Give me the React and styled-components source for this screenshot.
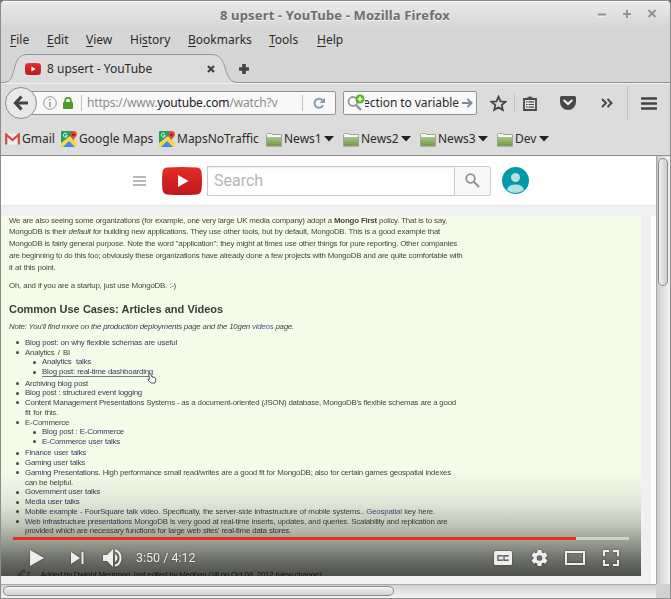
import React from "react";
import styled, { createGlobalStyle, css } from "styled-components";

const Global = createGlobalStyle`
  * { box-sizing: border-box; }
  html, body { margin: 0; padding: 0; overflow: hidden; background: #74777f; }
`;

const Window = styled.div`
  width: 671px; height: 599px; overflow: hidden;
  display: flex; flex-direction: column;
  border: 1px solid #8c8c8c; border-radius: 5px 5px 0 0;
  background: #d6d6d6; color: #2b2b2b;
  font-family: "Noto Sans", "Open Sans", sans-serif; font-size: 12px;
`;
const TitleBar = styled.header`
  height: 27px; flex: none; display: grid; grid-template-columns: 1fr auto; align-items: center;
  background: linear-gradient(#e9e9e9, #d6d6d6);
  border-top: 1px solid #fff; padding-right: 13px;
`;
const Title = styled.h1`
  margin: 0 0 0 219px; font-size: 13px; line-height: 20px; font-weight: 700; white-space: nowrap;
  color: #6e6e6e; text-shadow: 0 1px #f5f5f5; letter-spacing: 0.15px;
`;
const WindowButtons = styled.div`display: flex; gap: 13px; margin-top: -4px;`;

const MenuBar = styled.nav`height: 25px; flex: none; display: flex; padding: 0 0 2px 9px; align-items: center;`;
const MenuItem = styled.span`
  width: ${(p) => p.$w}px; line-height: 16px; white-space: nowrap;
  u { text-underline-offset: 2px; text-decoration-thickness: 1px; }
`;

const TabStrip = styled.div`height: 30px; flex: none; display: grid; grid-template-columns: 237px 1fr;`;
const Tab = styled.div`
  display: grid; height: 30px;
  > * { grid-area: 1 / 1; }
`;
const TabContent = styled.div`display: flex; align-items: center; padding: 1px 0 0 24px;`;
const TabLabel = styled.span`margin-left: 6px; width: 160px; line-height: 16px; white-space: nowrap;`;
const TabRest = styled.div`display: flex; align-items: flex-start; padding: 11px 0 0 1px; border-bottom: 1px solid #909396; height: 30px;`;

const Toolbar = styled.div`
  height: 40px; flex: none; display: flex; align-items: center; background: #dcdcdc; padding: 0 0 1px 4px;
  border-top: 1px solid #f0f0f0;
`;
const BackButton = styled.div`
  width: 32px; height: 32px; flex: none; border-radius: 50%; border: 1px solid #8e8e8e; z-index: 1;
  background: #e9e9e9; display: grid; place-items: center;
`;
const UrlField = styled.div`
  width: 306px; height: 24px; flex: none; margin-left: -7px; background: #f8f8f8; border: 1px solid #929292;
  border-radius: 2px; display: flex; align-items: center; padding-left: 12px;
`;
const Rule = styled.i`width: 1px; flex: none; height: ${(p) => p.$h}px; background: #c2c2c2; margin: 0 ${(p) => p.$r}px 0 ${(p) => p.$l}px;`;
const UrlText = styled.span`
  width: 191px; overflow: hidden; white-space: nowrap; font-size: 12px; line-height: 20px; color: #8d8d8d; letter-spacing: -0.18px;
  b { font-weight: 400; color: #222; }
`;
const SearchField = styled.div`
  width: 134px; height: 24px; flex: none; margin-left: 7px; background: #f8f8f8; border: 1px solid #929292; border-radius: 2px;
  display: flex; align-items: center; padding-left: 3px;
`;
const SearchText = styled.span`
  width: 94px; display: flex; justify-content: flex-end; overflow: hidden; white-space: nowrap; line-height: 20px; margin-right: 3px;
  letter-spacing: -0.08px;
`;
const Tools = styled.div`display: flex; align-items: center; flex: 1; padding-left: 13px;`;

const Bookmarks = styled.div`
  height: 33px; flex: none; display: flex; align-items: center; background: #dcdcdc; padding-left: 4px;
  border-bottom: 1px solid #8f8f8f;
`;
const Bookmark = styled.div`width: ${(p) => p.$w}px; display: flex; align-items: center; gap: 2px; flex: none;`;
const BookmarkLabel = styled.span`line-height: 18px; white-space: nowrap; width: ${(p) => p.$w}px;`;

const Body = styled.div`flex: 1; min-height: 0; display: grid; grid-template-columns: 655px 14px; grid-template-rows: 428px 14px;`;
const Page = styled.main`background: #f0f0f0; overflow: hidden; font-family: Roboto, sans-serif;`;
const Masthead = styled.div`
  height: 50px; background: #fff; border-bottom: 1px solid #e6e6e6; display: flex; align-items: center; padding-left: 132px;
`;
const Input = styled.div`
  width: 247px; height: 30px; margin-left: 5px; border: 1px solid #c8c8c8; border-right: 0; padding-left: 6px;
  box-shadow: inset 0 1px 2px #eee; font-size: 16px; line-height: 28px; color: #b5b5b5;
`;
const SearchButton = styled.div`width: 37px; height: 30px; border: 1px solid #ccc; border-radius: 0 2px 2px 0; background: #f8f8f8; display: grid; place-items: center;`;
const Watch = styled.div`display: flex; justify-content: space-between; padding-top: 10px; height: 378px;`;
const SideCard = styled.div`width: 5px; background: #fff;`;
const Player = styled.section`
  width: 640px; height: 360px; overflow: hidden; background: #f4fbe9; display: grid;
  > * { grid-area: 1 / 1; min-height: 0; }
`;
const Frame = styled.article`
  height: 360px; overflow: hidden; padding-left: 8px; color: #45483f;
  font-family: "Liberation Sans", Arial, sans-serif; font-size: 7.9px; filter: blur(0.25px);
`;
const Line = styled.div`
  width: ${(p) => p.$w}px; height: ${(p) => p.$h || 9.75}px; line-height: ${(p) => p.$h || 9.75}px;
  white-space: nowrap; text-align: justify; text-align-last: justify; letter-spacing: -0.23px;
`;
const Paragraph = styled.div`margin-top: -1.5px;`;
const Heading = styled(Line)`font-size: 11px; font-weight: 700; color: #3b3a34; margin-top: 4px; letter-spacing: -0.05px;`;
const Note = styled(Line)`font-style: italic; margin-top: 6.5px; margin-bottom: 6px;`;
const Link = styled.span`color: ${(p) => (p.$bright ? "#46568f" : "#35425a")}; ${(p) => p.$u && css`border-bottom: 0.6px solid #6d7a88;`}`;
const Row = styled.div`
  display: grid; grid-template-columns: 9px auto; padding-left: ${(p) => (p.$sub ? 24 : 7)}px; margin-top: ${(p) => (p.$gap ? 1.6 : 0)}px;
  &::before { content: ""; width: 3px; height: 3px; border-radius: 50%; background: #45483f; align-self: center; visibility: ${(p) => (p.$cont ? "hidden" : "visible")}; }
`;
const Caption = styled.div`display: flex; gap: 10px; margin: 34px 0 0 8px; color: #30332d; line-height: 10px;`;

const Overlay = styled.div`
  z-index: 1; height: 360px; display: flex; flex-direction: column; justify-content: flex-end; padding: 0 12px;
  background: linear-gradient(transparent 255px, rgba(0,0,0,.08) 287px, rgba(0,0,0,.2) 307px, rgba(0,0,0,.36) 324px, rgba(0,0,0,.56) 344px, rgba(0,0,0,.69) 360px);
`;
const Track = styled.div`height: 3px; background: #d0d3cb; width: 616px;`;
const Played = styled.div`height: 3px; width: 563px; background: #f12b24;`;
const Controls = styled.div`height: 36px; display: flex; align-items: center; padding: 0 0 1px 17px; filter: drop-shadow(0 0 1px rgba(0,0,0,.45));`;
const Time = styled.span`color: #eee; font-size: 12.5px; width: 358px; margin-left: 14px;`;

const VScroll = styled.div`border-left: 1px solid #a5a5a5; background: linear-gradient(90deg, #ccc, #f2f2f2); padding: 2px 1px;`;
const VThumb = styled.div`width: 10px; height: 128px; border: 1px solid #8b8b8b; border-radius: 5px; background: linear-gradient(90deg, #f1f1f1, #cdcdcd);`;
const HScroll = styled.div`border-top: 1px solid #a9a9a9; background: linear-gradient(#d2d2d2, #f4f4f4); padding: 1px 2px;`;
const HThumb = styled.div`width: 391px; height: 10px; border: 1px solid #8b8b8b; border-radius: 5px; background: linear-gradient(#f3f3f3, #cfcfcf);`;
const Corner = styled.div`background: #d2d2d2;`;
const Svg = styled.svg`flex: none; display: block; margin-left: ${(p) => p.$l || 0}px;`;
const Pointer = styled.svg`margin: 157px 0 0 146px; z-index: 1;`;

const Tube = ({ w, h, l }) => (
  <Svg width={w} height={h} viewBox="0 0 40 28" preserveAspectRatio="none" $l={l}>
    <defs><linearGradient id="tube" x2="0" y2="1"><stop stopColor="#e52d27" /><stop offset="1" stopColor="#bf171d" /></linearGradient></defs>
    <path d="M5 .6Q20-.6 35 .6Q39.3 1 39.6 6Q40.4 14 39.6 22Q39.3 27 35 27.4Q20 28.6 5 27.4Q.7 27 .4 22Q-.4 14 .4 6Q.7 1 5 .6Z" fill="url(#tube)" />
    <path d="M16 8v12l10.500-6Z" fill="#fff" />
  </Svg>
);
const Maps = () => (
  <Svg width="16" height="16" viewBox="0 0 16 16">
    <path d="M0 1Q0 0 1 0H15Q16 0 16 1V15L15 16H1L0 15Z" fill="#dedbd2" />
    <path d="M0 1Q0 0 1 0H12L11 7L0 16Z" fill="#23a05c" />
    <path d="M0 12L9 5L16 12V15L13 16L8 10.500L1.500 16H0Z" fill="#f6d846" />
    <path d="M2 16L8 10L14 16Z" fill="#4286f5" />
    <path d="M6.100 3.200A2 2 0 1 0 6.300 4.700H4.500" fill="none" stroke="#fff" />
    <path d="M12.500 0A3.600 3.600 0 0 0 9 3.600C9 6 12 6.700 12.300 10.500C12.700 6.700 16 6 16 3.600A3.600 3.600 0 0 0 12.500 0Z" fill="#de4b3e" />
    <circle cx="12.500" cy="3.700" r="1.300" fill="#7b231e" />
  </Svg>
);
const Folder = () => (
  <Svg width="16" height="15" viewBox="0 0 16 15">
    <defs><linearGradient id="fold" x2="0" y2="1"><stop stopColor="#a9c687" /><stop offset="1" stopColor="#719a45" /></linearGradient></defs>
    <path d="M.5 13.500V2.500L1.500 1.500H5.500L7 2.500H15.500V13.500Z" fill="#f6f6f6" stroke="#a2a2a2" />
    <path d="M1 5H15V13.500H1Z" fill="url(#fold)" />
    <path d="M0 14H16" stroke="#78965b" />
  </Svg>
);
const Caret = () => <Svg width="10" height="6" viewBox="0 0 10 6"><path d="M0 0H10L5 5.500Z" fill="#222" /></Svg>;

const menus = [["", "F", "ile", 37], ["", "E", "dit", 39], ["", "V", "iew", 44], ["Hi", "s", "tory", 58], ["", "B", "ookmarks", 81], ["", "T", "ools", 48], ["", "H", "elp", 40]];
const folders = [["News1", 37], ["News2", 37], ["News3", 37], ["Dev", 21]];
const items = [
  [152, <Link>Blog post: on why flexible schemas are useful</Link>],
  [45, "Analytics / BI"],
  [49, <Link>Analytics talks</Link>, { $sub: true }],
  [111, <Link $u>Blog post: real-time dashboarding</Link>, { $sub: true }],
  [63, <Link>Archiving blog post</Link>, { $gap: true }],
  [117, <Link>Blog post : structured event logging</Link>],
  [431, <><Link>Content Management Presentations</Link> Systems - as a document-oriented (JSON) database, MongoDB's flexible schemas are a good</>],
  [33, "fit for this.", { $cont: true }],
  [43, "E-Commerce"],
  [82, <Link>Blog post : E-Commerce</Link>, { $sub: true }],
  [78, <Link>E-Commerce user talks</Link>, { $sub: true }],
  [61, <Link>Finance user talks</Link>, { $gap: true }],
  [60, <Link>Gaming user talks</Link>],
  [426, <><Link>Gaming Presentations</Link>. High performance small read/writes are a good fit for MongoDB; also for certain games geospatial indexes</>],
  [48, "can be helpful.", { $cont: true }],
  [75, <Link>Government user talks</Link>],
  [54.500, <Link>Media user talks</Link>],
  [410, <><Link>Mobile example - FourSquare talk video</Link>. Specifically, the server-side infrastructure of mobile systems.. <Link $bright>Geospatial</Link> key here.</>],
  [422.500, <><Link>Web infrastructure presentations</Link> MongoDB is very good at real-time inserts, updates, and queries. Scalability and replication are</>],
  [266, "provided which are necessary functions for large web sites' real-time data stores.", { $cont: true }],
];

export default function App() {
  return (
    <>
      <Global />
      <Window>
        <TitleBar>
          <Title>8 upsert - YouTube - Mozilla Firefox</Title>
          <WindowButtons>
            <Svg width="10" height="12" viewBox="0 0 10 12"><path d="M1 9H9" stroke="#fff" /><path d="M1 7.500H9" stroke="#929292" strokeWidth="2" /></Svg>
            <Svg width="14" height="12" viewBox="0 0 14 12"><path d="M3 7H11M7 3V11" stroke="#929292" strokeWidth="2" /></Svg>
            <Svg width="10" height="12" viewBox="0 0 10 12"><path d="M1.500 3L8.500 10M8.500 3L1.500 10" stroke="#929292" strokeWidth="2" /></Svg>
          </WindowButtons>
        </TitleBar>
        <MenuBar>
          {menus.map(([a, u, b, w]) => <MenuItem key={b} $w={w}>{a}<u>{u}</u>{b}</MenuItem>)}
        </MenuBar>
        <TabStrip>
          <Tab>
            <Svg width="237" height="30" viewBox="0 0 237 30">
              <path d="M0 29.500H3C17 29.500 9 2 26 1.500H211C229 2 221 29.500 236 29.500H237V30H0Z" fill="#dcdcdc" />
              <path d="M0 29.500H2C18 29.500 8 2 26 1.500H211C229 2 220 29.500 237 29.500" fill="none" stroke="#8f979e" />
            </Svg>
            <TabContent>
              <Tube w={16} h={12} />
              <TabLabel>8 upsert - YouTube</TabLabel>
              <Svg width="8" height="8" viewBox="0 0 8 8"><path d="M1 1L7 7M7 1L1 7" stroke="#444" strokeWidth="2.300" /></Svg>
            </TabContent>
          </Tab>
          <TabRest><Svg width="10" height="10" viewBox="0 0 10 10"><path d="M0 5H10M5 0V10" stroke="#444" strokeWidth="3.600" /></Svg></TabRest>
        </TabStrip>
        <Toolbar>
          <BackButton>
            <Svg width="16" height="16" viewBox="0 0 16 16"><path d="M8.500 1.500L2.500 8L8.500 14.500M3 8H15" fill="none" stroke="#444" strokeWidth="3.200" /></Svg>
          </BackButton>
          <UrlField>
            <Svg width="14" height="14" viewBox="0 0 14 14"><circle cx="7" cy="7" r="6.300" fill="none" stroke="#929292" /><path d="M7 3V4.500M7 6V11" stroke="#929292" strokeWidth="1.500" /></Svg>
            <Svg width="10" height="12" viewBox="0 0 10 12" $l={6}><path d="M2.200 6V3.500A2.800 2.800 0 0 1 7.800 3.500V6" fill="none" stroke="#4d9a28" strokeWidth="1.800" /><rect y="5" width="10" height="7" rx="1" fill="#4d9a28" /></Svg>
            <Rule $h={16} $l={8} $r={5} />
            <UrlText>https://www.<b>youtube.com</b>/watch?v=</UrlText>
            <Rule $h={16} $l={24} $r={10} />
            <Svg width="13" height="13" viewBox="0 0 13 13"><path d="M10 8.300A4.500 4.500 0 1 1 9.300 3.200" fill="none" stroke="#8998aa" strokeWidth="2" /><path d="M12 .5V6H6.500Z" fill="#8998aa" /></Svg>
          </UrlField>
          <SearchField>
            <Svg width="18" height="18" viewBox="0 0 18 18">
              <circle cx="6" cy="7.500" r="4.500" fill="none" stroke="#999" strokeWidth="1.800" /><path d="M9 11L14 16" stroke="#999" strokeWidth="2.600" />
              <circle cx="13" cy="5" r="4.500" fill="#56b617" /><path d="M10.500 5H15.500M13 2.500V7.500" stroke="#fff" strokeWidth="1.600" />
            </Svg>
            <SearchText><span>ection to variable</span></SearchText>
            <Svg width="11" height="10" viewBox="0 0 11 10"><path d="M0 5H9M5.500 1L9.500 5L5.500 9" fill="none" stroke="#7b8a9b" strokeWidth="1.900" /></Svg>
          </SearchField>
          <Tools>
            <Svg width="17" height="17" viewBox="0 0 17 17"><path d="M8.500 1.700L10.500 6.300L15.500 6.800L11.700 10.100L12.800 15L8.500 12.400L4.200 15L5.300 10.100L1.500 6.800L6.500 6.300Z" fill="none" stroke="#484848" strokeWidth="1.800" /></Svg>
            <Rule $h={18} $l={7} $r={8} />
            <Svg width="14" height="15" viewBox="0 0 14 15"><path d="M1 3H13V14H1Z" fill="#e4e4e4" stroke="#484848" strokeWidth="1.800" /><path d="M4 3V1.500H5.500V.5H8.500V1.500H10V3Z" fill="#484848" /><path d="M3 5.800H4.500M5.500 5.800H11M3 8.500H4.500M5.500 8.500H11M3 11.200H4.500M5.500 11.200H11" stroke="#484848" strokeWidth="1.200" /></Svg>
            <Svg width="16" height="14" viewBox="0 0 16 14" $l={23}><path d="M1.500 0H14.500Q16 0 16 1.500V6A8 8 0 0 1 0 6V1.500Q0 0 1.500 0Z" fill="#484848" /><path d="M4.300 4.500L8 8L11.700 4.500" fill="none" stroke="#eee" strokeWidth="2" strokeLinecap="round" /></Svg>
            <Svg width="12" height="10" viewBox="0 0 12 10" $l={25}><path d="M1 1L5 5L1 9M6.500 1L10.500 5L6.500 9" fill="none" stroke="#444" strokeWidth="1.900" /></Svg>
            <Rule $h={34} $l={14} $r={13} />
            <Svg width="16" height="13" viewBox="0 0 16 13"><path d="M1 1.500H15M1 6.500H15M1 11.500H15" stroke="#444" strokeWidth="2.600" strokeLinecap="round" /></Svg>
          </Tools>
        </Toolbar>
        <Bookmarks>
          <Bookmark $w={56}>
            <Svg width="15" height="12" viewBox="0 0 15 12"><path d="M1 .5H14V11.500H1Z" fill="#eee" /><path d="M1.200 11.500V1.500L7.500 7L13.800 1.500V11.500" fill="none" stroke="#d54b3d" strokeWidth="2.200" /></Svg>
            <BookmarkLabel>Gmail</BookmarkLabel>
          </Bookmark>
          <Bookmark $w={98}><Maps /><BookmarkLabel>Google Maps</BookmarkLabel></Bookmark>
          <Bookmark $w={107}><Maps /><BookmarkLabel>MapsNoTraffic</BookmarkLabel></Bookmark>
          {folders.map(([t, w]) => <Bookmark key={t} $w={77}><Folder /><BookmarkLabel $w={w + 1}>{t}</BookmarkLabel><Caret /></Bookmark>)}
        </Bookmarks>
        <Body>
          <Page>
            <Masthead>
              <Svg width="13" height="10" viewBox="0 0 13 10"><path d="M0 1H13M0 5H13M0 9H13" stroke="#b8b8b8" strokeWidth="2" /></Svg>
              <Tube w={40} h={28} l={16} />
              <Input>Search</Input>
              <SearchButton><Svg width="15" height="15" viewBox="0 0 15 15"><circle cx="5.500" cy="5.500" r="4.300" fill="none" stroke="#909090" strokeWidth="1.800" /><path d="M8.800 8.800L14 14" stroke="#909090" strokeWidth="2" /></Svg></SearchButton>
              <Svg width="27" height="27" viewBox="0 0 27 27" $l={11}>
                <circle cx="13.500" cy="13.500" r="13.500" fill="#009aa8" /><circle cx="13.500" cy="10.500" r="4.500" fill="#b3e0e5" />
                <path d="M5 23Q6 17.500 13.500 17.500T22 23Q18 26 13.500 26T5 23Z" fill="#b3e0e5" />
              </Svg>
            </Masthead>
            <Watch>
              <Player>
                <Frame>
                  <Paragraph>
                    <Line $w={438} $h={11.85}>We are also seeing some organizations (for example, one very large UK media company) adopt a <b>Mongo First</b> policy. That is to say,</Line>
                    <Line $w={431} $h={11.85}>MongoDB is their <i>default</i> for building new applications. They use other tools, but by default, MongoDB. This is a good example that</Line>
                    <Line $w={448} $h={11.85}>MongoDB is fairly general purpose. Note the word "application": they might at times use other things for pure reporting. Other companies</Line>
                    <Line $w={453.500} $h={11.85}>are beginning to do this too; obviously these organizations have already done a few projects with MongoDB and are quite comfortable with</Line>
                    <Line $w={46.500} $h={11.85}>it at this point.</Line>
                  </Paragraph>
                  <Line $w={167} $h={24}>Oh, and if you are a startup, just use MongoDB. :-)</Line>
                  <Heading $w={214} $h={14}>Common Use Cases: Articles and Videos</Heading>
                  <Note $w={285}>Note: You'll find more on the <Link>production deployments</Link> page and the 10gen <Link $bright>videos</Link> page.</Note>
                  {items.map(([w, t, o], i) => <Row key={i} {...o}><Line $w={w}>{t}</Line></Row>)}
                  <Caption><span>🖉2</span><Line $w={265}>Added by Dwight Merriman, last edited by Meghan Gill on Oct 08, 2012 (view change)</Line></Caption>
                </Frame>
                <Overlay>
                  <Track><Played /></Track>
                  <Controls>
                    <Svg width="14" height="16" viewBox="0 0 14 16"><path d="M0 0V16L14 8Z" fill="#eee" /></Svg>
                    <Svg width="13" height="12" viewBox="0 0 13 12" $l={27}><path d="M0 0V12L9 6ZM10.500 0H12.500V12H10.500Z" fill="#eee" /></Svg>
                    <Svg width="19" height="18" viewBox="0 0 19 18" $l={19}><path d="M0 6H4L10 0V18L4 12H0Z" fill="#eee" /><path d="M12 5V13Q14.500 11.500 14.500 9T12 5Z" fill="#eee" /><path d="M12 1.200Q17.500 3 17.500 9T12 16.800" fill="none" stroke="#eee" strokeWidth="2" /></Svg>
                    <Time>3:50 / 4:12</Time>
                    <Svg width="18" height="14" viewBox="0 0 18 14"><rect width="18" height="14" rx="1.500" fill="#eee" /><path d="M8 5.700V4.700H4V9.300H8V8.300M14 5.700V4.700H10V9.300H14V8.300" fill="none" stroke="#62655c" strokeWidth="1.400" /></Svg>
                    <Svg width="17" height="16" viewBox="2 2 20 20" $l={18.500}><path fill="#eee" d="M19.400 13a7.500 7.500 0 0 0 0-2l2.100-1.600c.2-.2.3-.5.1-.7l-2-3.400c-.1-.3-.4-.3-.6-.3l-2.500 1a7.300 7.300 0 0 0-1.700-1l-.4-2.600C14.400 2.200 14.200 2 14 2h-4c-.3 0-.5.2-.5.4L9.200 5a7.300 7.300 0 0 0-1.700 1L5 5c-.2 0-.5 0-.6.300l-2 3.400c-.1.200-.1.500.1.700L4.600 11a7.500 7.500 0 0 0 0 2l-2.100 1.600c-.2.200-.2.500-.1.700l2 3.400c.1.300.4.300.6.300l2.500-1a7.300 7.300 0 0 0 1.700 1l.3 2.600c0 .2.2.4.5.4h4c.2 0 .4-.2.4-.4l.4-2.600a7.300 7.300 0 0 0 1.700-1l2.500 1c.2 0 .5 0 .6-.3l2-3.400c.2-.2.1-.5-.1-.7ZM12 15.500A3.500 3.500 0 1 1 12 8.500A3.500 3.500 0 0 1 12 15.500Z" /></Svg>
                    <Svg width="20" height="14" viewBox="0 0 20 14" $l={17.500}><path d="M1 1H19V13H1Z" fill="none" stroke="#eee" strokeWidth="2" /></Svg>
                    <Svg width="16" height="16" viewBox="0 0 16 16" $l={18}><path d="M6 1H1V6M10 1H15V6M15 10V15H10M6 15H1V10" fill="none" stroke="#eee" strokeWidth="2" /></Svg>
                  </Controls>
                </Overlay>
                <Pointer width="10" height="11" viewBox="0 0 10 11">
                  <path d="M2 1Q3 0 3.800 1.500L5 4L8 4.500Q9.500 5.500 8.500 8L8 10H4L1 7Q.5 5.500 2.800 6L1.500 2Z" fill="#fff" stroke="#44484c" strokeWidth=".9" />
                </Pointer>
              </Player>
              <SideCard />
            </Watch>
          </Page>
          <VScroll><VThumb /></VScroll>
          <HScroll><HThumb /></HScroll>
          <Corner />
        </Body>
      </Window>
    </>
  );
}
